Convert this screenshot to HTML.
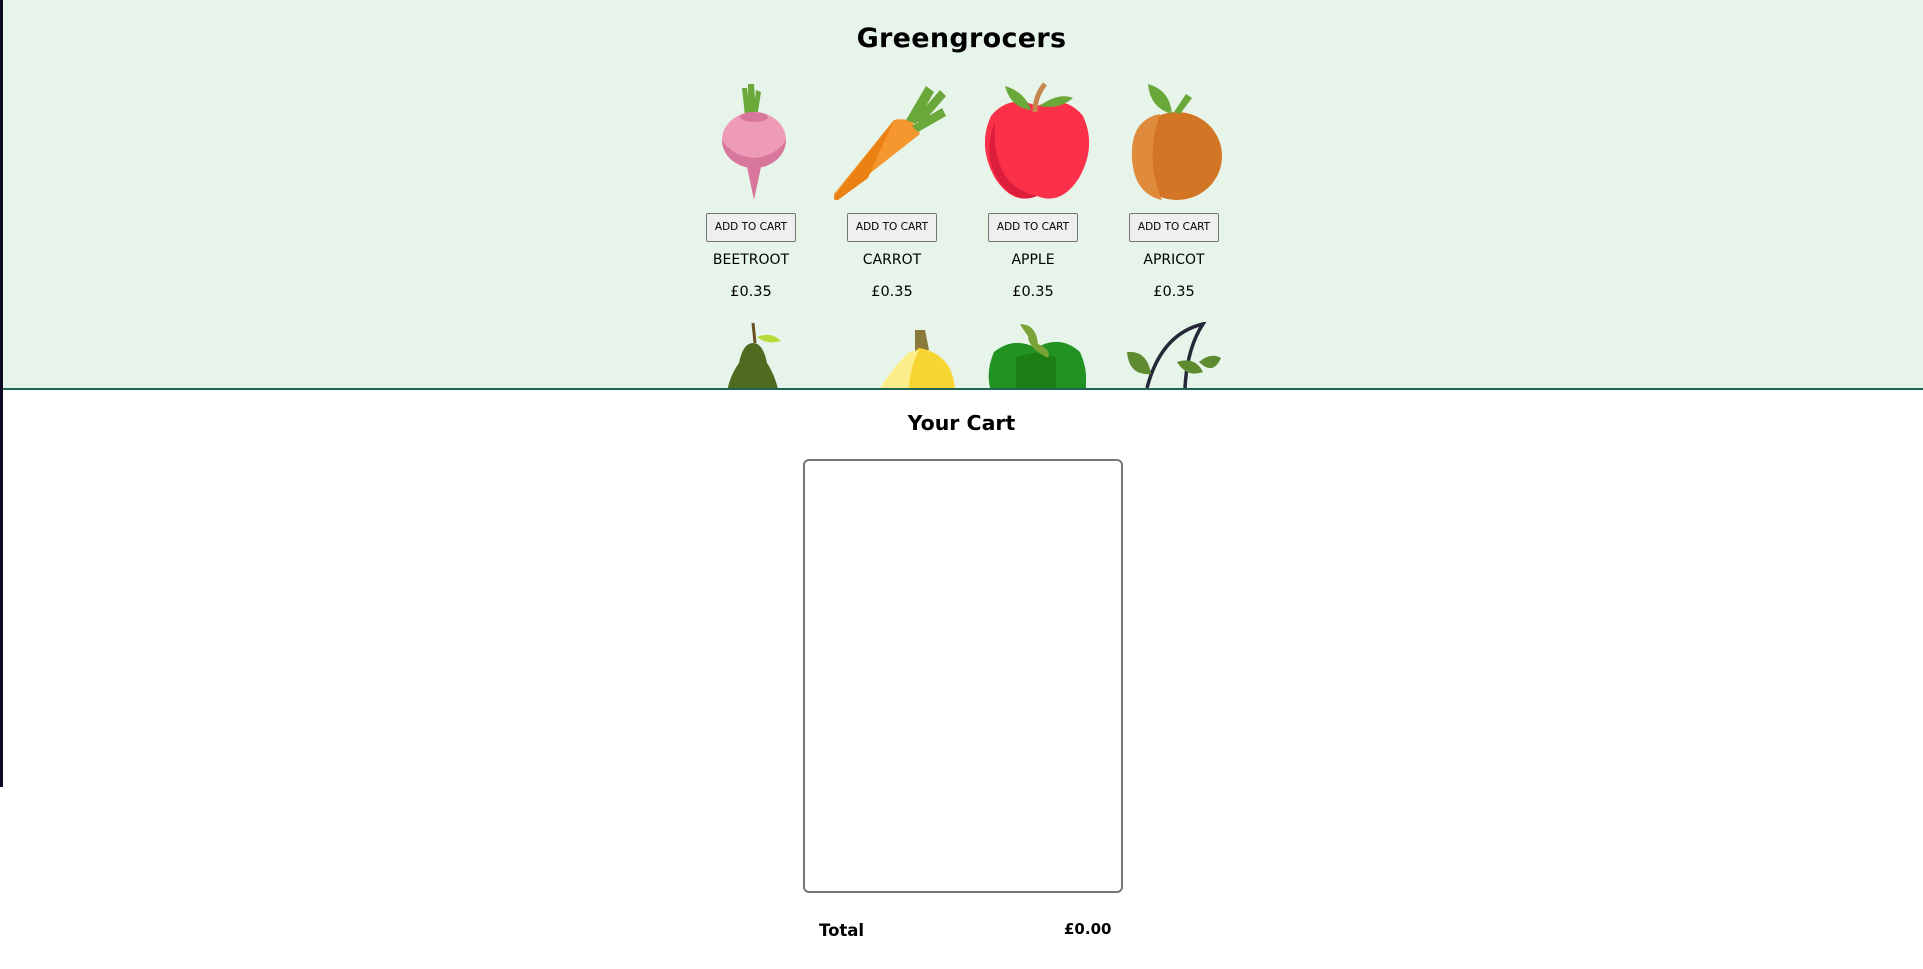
<!DOCTYPE html>
<html><head><meta charset="utf-8"><style>
html,body{margin:0;padding:0;width:1923px;height:969px;overflow:hidden;background:#fff;font-family:"DejaVu Sans","Liberation Sans",sans-serif;color:#000}
#strip{position:absolute;left:0;top:0;width:3px;height:787px;background:#0b0a22}
#hdr{position:absolute;left:3px;top:0;width:1920px;height:388px;background:#e6f4ea;border-bottom:2px solid #1d6455;overflow:hidden}
h1{position:absolute;left:-3px;width:1923px;top:23px;margin:0;text-align:center;font-size:27px;font-weight:bold;letter-spacing:0.3px}
.btn{position:absolute;top:213px;width:88px;height:27px;border:1px solid #767676;background:#efefef;border-radius:2px;font-size:10.5px;line-height:27px;text-align:center}
.nm{position:absolute;top:252px;width:140px;text-align:center;font-size:14px}
.pr{position:absolute;top:284px;width:140px;text-align:center;font-size:14.5px}
h2{position:absolute;left:0;width:1923px;top:411px;margin:0;text-align:center;font-size:20.5px;font-weight:bold}
#box{position:absolute;left:803px;top:459px;width:316px;height:430px;border:2px solid #777;border-radius:6px}
#tot{position:absolute;left:819px;top:921px;font-size:16.5px;font-weight:bold}
#amt{position:absolute;left:1064px;top:920px;font-size:15px;font-weight:bold}
</style></head><body>
<div id="strip"></div>
<div id="hdr">
<h1>Greengrocers</h1>
<svg style="position:absolute;left:713px;top:84px" width="76" height="116" viewBox="0 0 76 116">
<path d="M32 0 l6 0 l2 30 l-8 0z M26 4 l5 0 l3 28 l-5 0z M40 6 l5 2 l-4 26 l-4 0z" fill="#6aa83a"/>
<ellipse cx="38" cy="56" rx="32" ry="28" fill="#ee9bb7"/>
<path d="M6 56 a32 28 0 0 0 64 0 q-10 16 -32 18 q-22 -2 -32 -18z" fill="#d8779b"/>
<path d="M30 78 l8 38 l8 -38z" fill="#d8779b"/>
<ellipse cx="38" cy="33" rx="14" ry="5" fill="#d8779b"/>
</svg>
<svg style="position:absolute;left:831px;top:84px" width="122" height="118" viewBox="0 0 122 118">
<path d="M60 36 q20 -4 26 14 l-84 66 q-6 0 -2 -6z" fill="#f5962e"/>
<path d="M60 36 l-58 74 q-4 6 2 6 l30 -22 z" fill="#ea8112"/>
<path d="M72 36 l20 -34 l8 6 l-18 32z M78 42 l30 -18 l4 8 l-28 16z M80 36 l26 -30 l6 6 l-24 28z" fill="#6aa83a"/>
</svg>
<svg style="position:absolute;left:982px;top:82px" width="104" height="120" viewBox="0 0 104 120">
<path d="M52 24 q-28 -12 -46 10 q-14 30 4 62 q18 28 42 18 q24 10 42 -18 q18 -32 4 -62 q-18 -22 -46 -10z" fill="#fb3049"/>
<path d="M10 40 q-14 36 6 62 q16 20 36 12 q-46 -10 -42 -74z" fill="#dd1e3a"/>
<path d="M50 30 q0 -16 10 -28" stroke="#c7844c" stroke-width="5" fill="none"/>
<path d="M20 4 q20 6 26 24 q-20 -2 -26 -24z M54 24 q20 -14 34 -8 q-14 12 -34 8z" fill="#6aa83a"/>
</svg>
<svg style="position:absolute;left:1127px;top:82px" width="94" height="120" viewBox="0 0 94 120">
<ellipse cx="47" cy="74" rx="45" ry="44" fill="#d27625"/>
<path d="M30 32 q-30 6 -28 44 q2 36 30 42 q-18 -40 -2 -86z" fill="#e08a3c"/>
<path d="M18 2 q22 6 24 30 q-22 -6 -24 -30z M44 30 l12 -18 l6 4 l-12 16z" fill="#6aa83a"/>
</svg>
<svg style="position:absolute;left:720px;top:323px" width="64" height="70" viewBox="0 0 64 70">
<path d="M30 0 l2 20" stroke="#6b4e1e" stroke-width="3"/>
<path d="M34 14 q14 -6 24 4 q-14 4 -24 -4z" fill="#b6dc3a"/>
<path d="M30 20 q-10 0 -14 20 q-10 14 -12 30 l52 0 q-4 -18 -12 -30 q-4 -20 -14 -20z" fill="#4e6b20"/>
</svg>
<svg style="position:absolute;left:876px;top:330px" width="76" height="60" viewBox="0 0 76 60">
<path d="M36 0 l10 0 l4 20 l-14 2z" fill="#8a7a3c"/>
<path d="M40 18 q34 6 36 42 l-60 0 q10 -30 24 -42z" fill="#f7d634"/>
<path d="M30 22 q-20 20 -30 38 l30 0 q0 -20 10 -40z" fill="#fcee8a"/>
</svg>
<svg style="position:absolute;left:983px;top:322px" width="100" height="66" viewBox="0 0 100 66">
<path d="M8 30 q20 -16 42 -4 q24 -14 44 4 q8 18 6 36 l-96 0 q-4 -18 4 -36z" fill="#229322"/>
<path d="M30 36 q22 -10 40 0 l0 30 l-40 0z" fill="#1c7f15"/>
<path d="M34 2 q16 0 18 20 q14 6 10 14 q-20 -10 -20 -22 q-6 -8 -8 -12z" fill="#79a337"/>
</svg>
<svg style="position:absolute;left:1120px;top:322px" width="100" height="66" viewBox="0 0 100 66">
<path d="M24 66 q14 -54 56 -64 q-16 24 -18 64" stroke="#262838" stroke-width="3.5" fill="none"/>
<path d="M4 30 q20 -2 24 22 q-22 2 -24 -22z M54 40 q18 -6 26 10 q-16 6 -26 -10z M76 40 q12 -10 22 -4 q-8 18 -22 4z" fill="#5e8a30"/>
</svg>
<div class="btn" style="left:703px">ADD TO CART</div>
<div class="btn" style="left:844px">ADD TO CART</div>
<div class="btn" style="left:985px">ADD TO CART</div>
<div class="btn" style="left:1126px">ADD TO CART</div>
<div class="nm" style="left:678px">BEETROOT</div>
<div class="nm" style="left:819px">CARROT</div>
<div class="nm" style="left:960px">APPLE</div>
<div class="nm" style="left:1101px">APRICOT</div>
<div class="pr" style="left:678px">£0.35</div>
<div class="pr" style="left:819px">£0.35</div>
<div class="pr" style="left:960px">£0.35</div>
<div class="pr" style="left:1101px">£0.35</div>
</div>
<h2>Your Cart</h2>
<div id="box"></div>
<div id="tot">Total</div>
<div id="amt">£0.00</div>
</body></html>
